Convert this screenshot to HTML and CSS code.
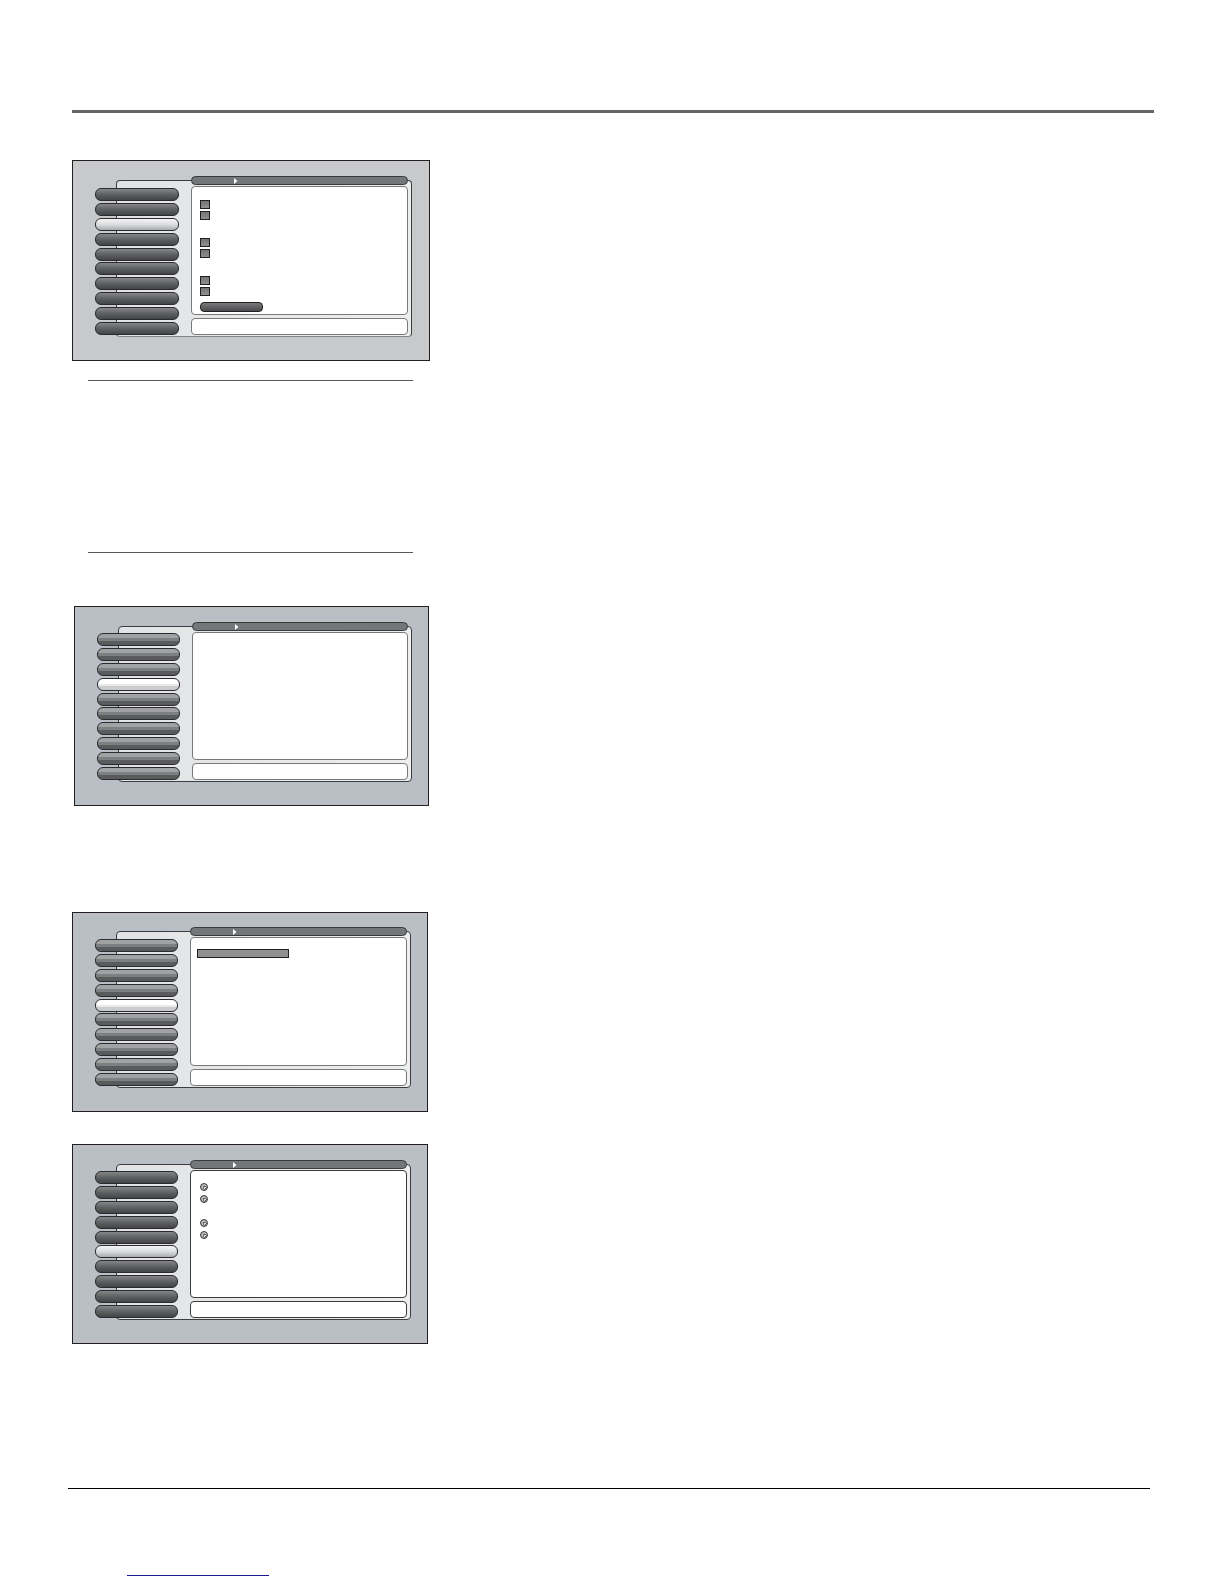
FILE: index.html
```html
<!DOCTYPE html>
<html lang="en">
	<head>
		<meta charset="UTF-8">
		<title>Menu screens</title>
		<link rel="stylesheet" href="styles.css">
	</head>
	
	<body>
		<header class="page-header"></header>
		
		<main class="page">
			<section class="screen gray">
				<div class="panel"></div>
				<nav class="menu">
					<button type="button" aria-label="Item 1"></button>
					<button type="button" aria-label="Item 2"></button>
					<button type="button" aria-label="Item 3" class="current"></button>
					<button type="button" aria-label="Item 4"></button>
					<button type="button" aria-label="Item 5"></button>
					<button type="button" aria-label="Item 6"></button>
					<button type="button" aria-label="Item 7"></button>
					<button type="button" aria-label="Item 8"></button>
					<button type="button" aria-label="Item 9"></button>
					<button type="button" aria-label="Item 10"></button>
				</nav>
				<div class="content">
					<div class="path"><svg width="4" height="6" viewBox="0 0 4 6"><path d="M0 0L3.5 3L0 6Z"/></svg></div>
					<div class="box main checks">
						<div class="group">
							<input type="checkbox" aria-label="Option 1">
							<input type="checkbox" aria-label="Option 2">
						</div>
						<div class="group">
							<input type="checkbox" aria-label="Option 3">
							<input type="checkbox" aria-label="Option 4">
						</div>
						<div class="group">
							<input type="checkbox" aria-label="Option 5">
							<input type="checkbox" aria-label="Option 6">
						</div>
						<button type="button" class="action" aria-label="Continue"></button>
					</div>
					<div class="box help"></div>
				</div>
			</section>
			
			<div class="note"></div>
			
			<section class="screen glossy narrow">
				<div class="panel"></div>
				<nav class="menu">
					<button type="button" aria-label="Item 1"></button>
					<button type="button" aria-label="Item 2"></button>
					<button type="button" aria-label="Item 3"></button>
					<button type="button" aria-label="Item 4" class="current"></button>
					<button type="button" aria-label="Item 5"></button>
					<button type="button" aria-label="Item 6"></button>
					<button type="button" aria-label="Item 7"></button>
					<button type="button" aria-label="Item 8"></button>
					<button type="button" aria-label="Item 9"></button>
					<button type="button" aria-label="Item 10"></button>
				</nav>
				<div class="content">
					<div class="path"><svg width="4" height="6" viewBox="0 0 4 6"><path d="M0 0L3.5 3L0 6Z"/></svg></div>
					<div class="box main"></div>
					<div class="box help"></div>
				</div>
			</section>
			
			<section class="screen glossy picker">
				<div class="panel"></div>
				<nav class="menu">
					<button type="button" aria-label="Item 1"></button>
					<button type="button" aria-label="Item 2"></button>
					<button type="button" aria-label="Item 3"></button>
					<button type="button" aria-label="Item 4"></button>
					<button type="button" aria-label="Item 5" class="current"></button>
					<button type="button" aria-label="Item 6"></button>
					<button type="button" aria-label="Item 7"></button>
					<button type="button" aria-label="Item 8"></button>
					<button type="button" aria-label="Item 9"></button>
					<button type="button" aria-label="Item 10"></button>
				</nav>
				<div class="content">
					<div class="path"><svg width="4" height="6" viewBox="0 0 4 6"><path d="M0 0L3.5 3L0 6Z"/></svg></div>
					<div class="box main list">
						<div class="selected"></div>
					</div>
					<div class="box help"></div>
				</div>
			</section>
			
			<section class="screen dark">
				<div class="panel"></div>
				<nav class="menu">
					<button type="button" aria-label="Item 1"></button>
					<button type="button" aria-label="Item 2"></button>
					<button type="button" aria-label="Item 3"></button>
					<button type="button" aria-label="Item 4"></button>
					<button type="button" aria-label="Item 5"></button>
					<button type="button" aria-label="Item 6" class="current"></button>
					<button type="button" aria-label="Item 7"></button>
					<button type="button" aria-label="Item 8"></button>
					<button type="button" aria-label="Item 9"></button>
					<button type="button" aria-label="Item 10"></button>
				</nav>
				<div class="content">
					<div class="path"><svg width="4" height="6" viewBox="0 0 4 6"><path d="M0 0L3.5 3L0 6Z"/></svg></div>
					<div class="box main radios">
						<div class="group">
							<input type="radio" name="first" aria-label="Choice 1">
							<input type="radio" name="first" aria-label="Choice 2">
						</div>
						<div class="group">
							<input type="radio" name="second" aria-label="Choice 1">
							<input type="radio" name="second" aria-label="Choice 2">
						</div>
					</div>
					<div class="box help"></div>
				</div>
			</section>
		</main>
		
		<footer class="page-footer">
			<a href="#" aria-label="Home page"></a>
		</footer>
	</body>
</html>
```
FILE: styles.css
```css
* {
	box-sizing: border-box;
}
body {
	margin: 0;
	background: #FFFFFF;
	font-family: "Liberation Sans", sans-serif;
}
button, input {
	display: block;
	margin: 0;
	padding: 0;
	appearance: none;
}

.page-header {
	margin: 110px 70px 47px 72px;
	border-top: 3px solid #666666;
}
.page {
	display: flex;
	flex-direction: column;
	align-items: flex-start;
	margin: 0 70px 0 72px;
}
.note {
	width: 325px;
	height: 173px;
	margin: 19px 16px 53px;
	border: solid #58595B;
	border-width: 1px 0;
}

/* The menu overlaps the left edge of the panel */
.screen {
	display: grid;
	grid-template-columns: 22px 21px 62px 12px 1fr 4px 16px;
	grid-template-rows: 15px 4px 7px 1fr 2px 23px;
	width: 356px;
	height: 200px;
	border: 1px solid #231F20;
	background: #BABFC6;
}
.screen.gray {
	grid-template-columns: 22px 21px 63px 12px 1fr 4px 17px;
	grid-template-rows: 15px 4px 8px 1fr 2px 23px;
	width: 358px;
	height: 201px;
	background: #C7C9CA;
}
.screen.narrow {
	width: 355px;
	margin-left: 2px;
	margin-bottom: 106px;
}
.screen.picker {
	grid-template-rows: 14px 4px 8px 1fr 2px 23px;
	margin-bottom: 32px;
}
.panel {
	grid-column: 3 / 7;
	grid-row: 3 / 6;
	border: 1px solid #3C3D40;
	border-radius: 4px;
	background: linear-gradient(to right, #E2E3E6, #EDEEEE);
}
.gray .panel {
	border-bottom-color: #808385;
}

.menu {
	display: flex;
	flex-direction: column;
	justify-content: space-between;
	grid-column: 2 / 4;
	grid-row: 4;
	z-index: 1;
}
.menu button {
	height: 13px;
	border: 1px solid #2B2B2D;
	border-radius: 6px;
	background: linear-gradient(#858687, #5F6062 50%, #434446);
}
.menu button.current {
	background: linear-gradient(#F4F4F5, #DCDDDE 50%, #A9ABAE);
}
.glossy .menu button {
	background: linear-gradient(#A0A2A3 0 35%, #7D7F80 35% 65%, #595B5D 65%);
}
.glossy .menu button.current {
	background: linear-gradient(#FFFFFF 0 45%, #E8E9EA 45% 65%, #CACCCE 65%);
}

.content {
	display: flex;
	flex-direction: column;
	grid-column: 5;
	grid-row: 2 / 5;
	z-index: 1;
}
.path {
	display: flex;
	align-items: center;
	height: 9px;
	margin-bottom: 1px;
	padding-left: 42px;
	border: 1px solid #3A3B3D;
	border-radius: 5px;
	background: #747678;
}
.path svg {
	fill: #FFFFFF;
}
.box {
	border: 1px solid #77797B;
	border-radius: 4px;
	background: #FFFFFF;
}
.dark .box {
	border-color: #3A3B3D;
}
.main {
	flex: 1;
	margin-bottom: 3px;
}
.help {
	height: 17px;
}

.group {
	display: flex;
	flex-direction: column;
}
.checks {
	padding: 13px 8px 0;
}
.checks .group {
	gap: 2px;
	margin-bottom: 18px;
}
.checks .group:nth-of-type(3) {
	margin-bottom: 6px;
}
.checks input {
	width: 10px;
	height: 9px;
	border: 1px solid #231F20;
	background: linear-gradient(#737476, #8D8F91);
}
.action {
	width: 63px;
	height: 10px;
	border: 1px solid #231F20;
	border-radius: 4px;
	background: linear-gradient(#77787A, #4A4B4D);
}
.list {
	padding: 11px 6px 0;
}
.selected {
	width: 92px;
	height: 9px;
	border: 1px solid #231F20;
	background: #8F9091;
}
.radios {
	padding: 12px 9px 0;
}
.radios .group {
	gap: 4px;
	margin-bottom: 16px;
}
.radios input {
	width: 8px;
	height: 8px;
	border: 1px solid #343537;
	border-radius: 50%;
	background: radial-gradient(circle at 60% 60%, #E4E4E4 0 1px, #626365 1px 2px, #B9BABB 2px);
}

.page-footer {
	margin: 144px 74px 0 68px;
	border-top: 1px solid #000000;
}
.page-footer a {
	display: block;
	width: 142px;
	height: 16px;
	margin: 71px 0 0 59px;
	border-bottom: 1px solid #1A1A90;
}
```
